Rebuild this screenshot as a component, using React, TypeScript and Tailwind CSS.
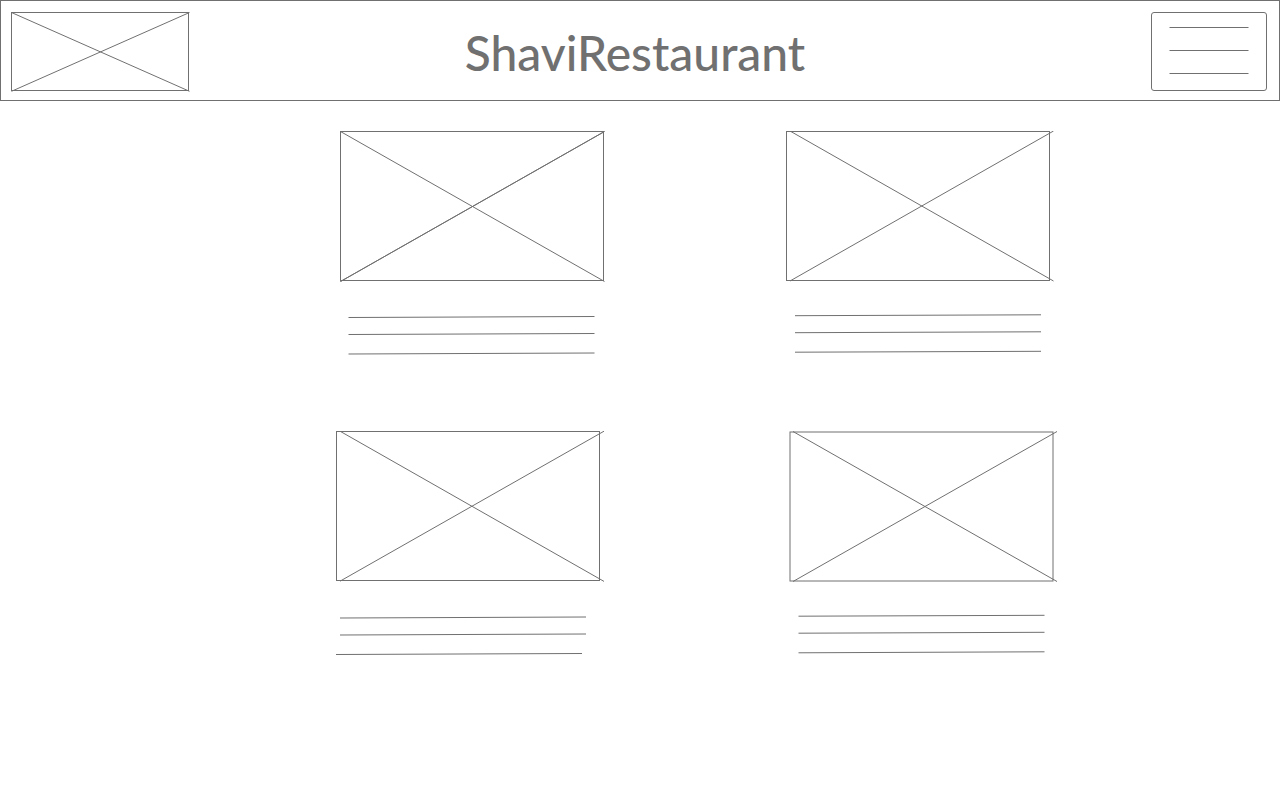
type Line = [number, number, number, number];

interface Dish {
  name: string;
  frame: [number, number];
  cross: Line[];
  text: Line[];
}

const dishes: Dish[] = [
  {
    name: "Dish 1",
    frame: [4.5, 0.5],
    cross: [
      [4.5, 0.5, 268.5, 150.5],
      [4.5, 150.5, 268.5, 0.5],
      [4.5, 150.5, 268.5, 0.5],
    ],
    text: [
      [12.5, 186.5, 258.5, 185.5],
      [12.5, 203.5, 258.5, 202.5],
      [12.5, 223, 258.5, 222],
    ],
  },
  {
    name: "Dish 2",
    frame: [0.5, 0.5],
    cross: [
      [4, 0, 267.5, 150],
      [4, 150, 267.5, 0],
    ],
    text: [
      [9, 184.7, 255, 183.8],
      [9, 201.7, 255, 200.8],
      [9, 221.2, 255, 220.3],
    ],
  },
  {
    name: "Dish 3",
    frame: [0.5, 0.5],
    cross: [
      [4, 0.2, 268, 150.4],
      [4, 150.2, 268, 0.2],
    ],
    text: [
      [4, 187, 250, 186],
      [4, 204, 250, 203],
      [0, 223.5, 246, 222.5],
    ],
  },
  {
    name: "Dish 4",
    frame: [4, 1],
    cross: [
      [7, 0.5, 271, 150.5],
      [7, 150.5, 271, 0.5],
    ],
    text: [
      [12.5, 185.2, 258.5, 184.3],
      [12.5, 202.2, 258.5, 201.3],
      [12.5, 221.8, 258.5, 220.8],
    ],
  },
];

function Strokes({ lines }: { lines: Line[] }) {
  return (
    <>
      {lines.map(([x1, y1, x2, y2], i) => (
        <line key={i} x1={x1} y1={y1} x2={x2} y2={y2} />
      ))}
    </>
  );
}

function DishCard({ dish }: { dish: Dish }) {
  return (
    <article>
      <svg
        className="h-[226px] w-[272px]"
        viewBox="0 0 272 226"
        fill="none"
        stroke="#707070"
        role="img"
        aria-label={dish.name}
      >
        <rect x={dish.frame[0]} y={dish.frame[1]} width="263" height="149" />
        <Strokes lines={dish.cross} />
        <Strokes lines={dish.text} />
      </svg>
    </article>
  );
}

export default function App() {
  return (
    <div className="min-h-screen bg-white text-[#707070]">
      <header className="grid grid-cols-[1fr_auto_1fr] items-start border border-[#707070] pt-[11px] pr-3 pb-[6px] pl-[10px]">
        <a href="#" aria-label="Home" className="justify-self-start">
          <svg className="block h-[80px] w-[179px]" viewBox="0 0 179 80" fill="none" stroke="#707070">
            <rect x="0.5" y="0.5" width="177" height="78" />
            <path d="M0.5 0.5 178.5 79.3M0.5 79.3 178.5 0.5" />
          </svg>
        </a>
        <h1 className="pr-2 font-['Lato',sans-serif] text-[48px] leading-[82px] font-medium">ShaviRestaurant</h1>
        <button
          type="button"
          aria-label="Menu"
          className="flex h-[79px] w-[116px] items-start justify-center justify-self-end rounded-[3px] border border-[#707070] pt-[14px]"
        >
          <svg className="h-[47px] w-[80px]" viewBox="0 0 80 47" fill="none" stroke="#707070">
            <path d="M0.5 0.5H79.5M0.5 23.5H79.5M0.5 46.5H79.5" />
          </svg>
        </button>
      </header>
      <main className="flex justify-center pt-[30px] pl-[114px]">
        <div className="grid grid-cols-[272px_272px] gap-x-[178px] gap-y-[74px]">
          {dishes.map((dish) => (
            <DishCard key={dish.name} dish={dish} />
          ))}
        </div>
      </main>
    </div>
  );
}
